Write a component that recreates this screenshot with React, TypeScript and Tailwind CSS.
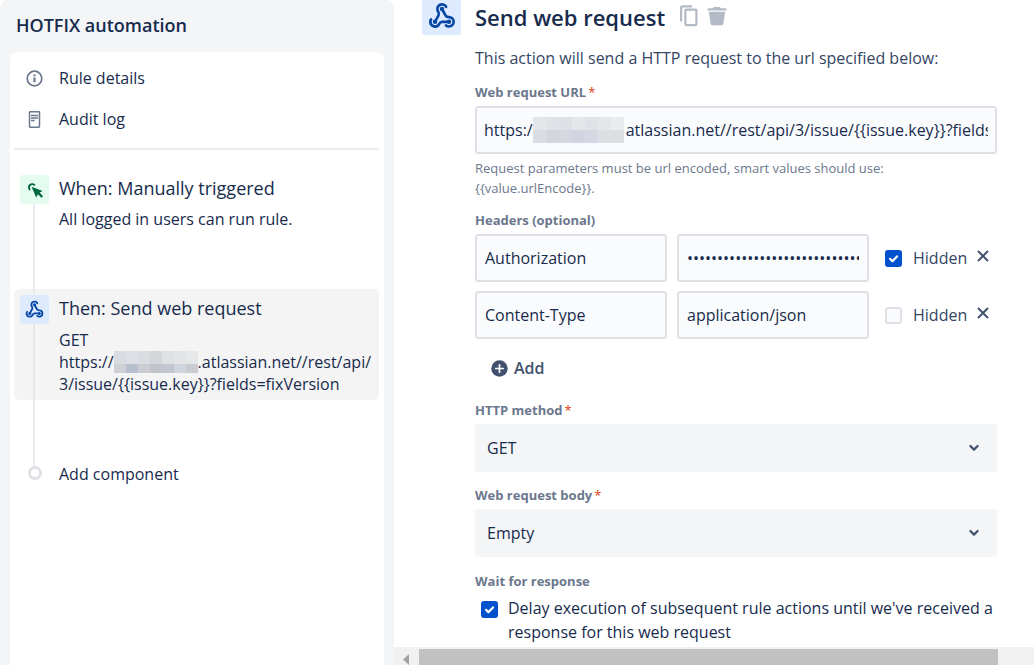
import { useState } from "react"

const Mosaic = ({ rows, cell }: { rows: string[][]; cell: string[] }) => (
    <span className="inline-flex flex-col align-top" aria-hidden="true">
        {rows.map((row, r) => (
            <span key={r} className="flex">
                {row.map((color, i) => (
                    <span key={i} className={cell[r]} style={{ backgroundColor: color }} />
                ))}
            </span>
        ))}
    </span>
)

const sideMosaic = [
    ["#d9dbe0", "#dde0e6", "#dadce1", "#d5d6da", "#dfe1e5", "#e2e4e7", "#e6e7e9"],
    ["#ced0d6", "#b8bfce", "#cbcdd3", "#c2c4cb", "#c3c6ce", "#cfd5df", "#c9cbd1"],
]

const urlMosaic = [
    ["#e3e5e9", "#dfe3e7", "#dde1e5", "#e5e6ea", "#dfe2e6", "#e4e6ea", "#e9ebee"],
    ["#dadde3", "#d3d6df", "#d5d8e1", "#d2d5df", "#d4d8e2", "#dcdfe4", "#dbdee3"],
]

function WebhookIcon({ className }: { className?: string }) {
    return (
        <svg viewBox="0 0 24 24" className={className} fill="none" stroke="#0747a6" strokeWidth="2.3" strokeLinecap="round" strokeLinejoin="round">
            <path d="M18 17h-6c-1.100 0-1.950.9-2.480 1.880A4 4 0 0 1 2 17c0-.7.2-1.400.57-2" />
            <path d="M6 17l3.130-5.780c.53-.97.1-2.180-.5-3.100a4 4 0 1 1 6.890-4.060" />
            <path d="M12 6l3.130 5.730C15.660 12.700 16.900 13 18 13a4 4 0 0 1 0 8c-1 0-1.900-.3-2.600-.9" />
            <g fill="#0747a6" stroke="none">
                <circle cx="12" cy="6" r="1.900" />
                <circle cx="6" cy="17" r="1.900" />
                <circle cx="18" cy="17" r="1.900" />
            </g>
        </svg>
    )
}

function Checkbox({ id, checked, onChange }: { id: string; checked: boolean; onChange: () => void }) {
    return (
        <span className="relative flex size-[17px] shrink-0">
            <input
                id={id}
                type="checkbox"
                checked={checked}
                onChange={onChange}
                className="size-full appearance-none rounded-[3px] border-2 border-[#dfe1e6] bg-[#fafbfc] checked:border-[#0052cc] checked:bg-[#0052cc]"
            />
            {checked && (
                <svg viewBox="0 0 17 17" className="pointer-events-none absolute inset-0" fill="none" stroke="#fff" strokeWidth="2.2" strokeLinecap="round" strokeLinejoin="round">
                    <path d="M5 8.8l2.4 2.4L12 6.4" />
                </svg>
            )}
        </span>
    )
}

function HeaderRow({ id, name, value, secret }: { id: string; name: string; value: string; secret?: boolean }) {
    const [hidden, setHidden] = useState(!!secret)
    const field = "h-12 w-full min-w-0 rounded-[3px] border-2 border-[#dfe1e6] bg-[#fafbfc] px-2 text-[16px]"

    return (
        <div className="flex">
            <div className="grid min-w-0 flex-1 grid-cols-2 gap-2.5">
                <input aria-label="Header name" defaultValue={name} className={field} />
                <input aria-label="Header value" type={hidden ? "password" : "text"} defaultValue={value} className={field} />
            </div>
            <div className="ml-4 flex w-28 shrink-0 items-center">
                <Checkbox id={id} checked={hidden} onChange={() => setHidden(!hidden)} />
                <label htmlFor={id} className="ml-[11px] text-[16px] text-[#344563]">Hidden</label>
                <button type="button" aria-label="Remove header" className="mb-1 ml-auto mr-2">
                    <svg viewBox="0 0 12 12" className="size-3" stroke="#42526e" strokeWidth="2">
                        <path d="M1 1l10 10M11 1L1 11" />
                    </svg>
                </button>
            </div>
        </div>
    )
}

function Label({ text, htmlFor, required }: { text: string; htmlFor?: string; required?: boolean }) {
    return (
        <label htmlFor={htmlFor} className="block text-[13px] font-bold leading-4 text-[#6b778c]">
            {text}
            {required && <span className="ml-0.5 font-normal text-[#de350b]">*</span>}
        </label>
    )
}

function SelectField({ id, options }: { id: string; options: string[] }) {
    return (
        <div className="relative mt-1.5">
            <select id={id} className="h-12 w-full appearance-none rounded-[3px] bg-[#f4f5f7] px-3 text-[16px]">
                {options.map((o) => <option key={o}>{o}</option>)}
            </select>
            <svg viewBox="0 0 10 8" className="pointer-events-none absolute right-[18px] top-5 h-2 w-2.5" fill="none" stroke="#42526e" strokeWidth="2.2" strokeLinecap="round" strokeLinejoin="round">
                <path d="M1.4 2L5 5.6 8.6 2" />
            </svg>
        </div>
    )
}

function Sidebar() {
    return (
        <aside className="w-[394px] shrink-0 rounded-t-lg bg-[#f4f5f7] px-2.5 pt-[11px]">
            <h2 className="ml-1.5 text-[18px] font-semibold leading-7">HOTFIX automation</h2>
            <div className="mt-[13px] min-h-[calc(100vh-52px)] rounded-t-lg bg-white pl-1 pr-[5px]">
                <nav className="flex flex-col gap-[17px] border-b-2 border-[#ebecf0] pb-[17px] pl-3 pt-3.5 text-[16px] leading-6">
                    <a href="#details" className="flex items-center gap-4">
                        <svg viewBox="0 0 17 17" className="size-[17px]" fill="none" stroke="#6b778c" strokeWidth="1.7">
                            <circle cx="8.5" cy="8.5" r="7.3" />
                            <path d="M8.5 7.6v4.6M8.5 4.4v1.8" strokeWidth="2.2" />
                        </svg>
                        Rule details
                    </a>
                    <a href="#log" className="flex items-center gap-4">
                        <svg viewBox="0 0 17 17" className="size-[17px]" fill="none" stroke="#6b778c" strokeWidth="1.5">
                            <rect x="3.5" y="0.8" width="10" height="15.4" rx="0.6" />
                            <path d="M5 4.4h7M5 7h7M5 9.4h3.6" />
                        </svg>
                        Audit log
                    </a>
                </nav>

                <ol className="mt-[18px]">
                    <li className="flex h-[121px] pl-1.5 pt-[7px]">
                        <div className="flex w-[29px] flex-col items-center">
                            <span className="flex size-[29px] shrink-0 items-center justify-center rounded-[3px] bg-[#e3fcef]">
                                <svg viewBox="0 0 16 16" className="size-4">
                                    <path d="M3.200 7.900A3.200 3.200 0 1 1 7.800 3.600" fill="none" stroke="#006644" strokeWidth="1.9" />
                                    <path d="M4.6 4.8L15.6 9 12.6 10.400 16 14.200 14.400 15.700 11 12.200 9.200 15.400Z" fill="#006644" />
                                </svg>
                            </span>
                            <span className="mr-px w-0.5 flex-1 bg-[#ebecf0]" />
                        </div>
                        <div className="ml-2.5">
                            <h3 className="-mt-px text-[18px] leading-7">When: Manually triggered</h3>
                            <p className="mt-1.5 text-[16px] leading-[22px]">All logged in users can run rule.</p>
                        </div>
                    </li>
                    <li className="flex h-[111px] rounded-[5px] bg-[#f4f4f4] pl-1.5">
                        <div className="flex w-[29px] flex-col items-center">
                            <span className="mr-px h-1.5 w-0.5 bg-[#e6e7eb]" />
                            <span className="flex size-[29px] shrink-0 items-center justify-center rounded-[3px] bg-[#deebff]">
                                <WebhookIcon className="size-[19px]" />
                            </span>
                            <span className="mr-px w-0.5 flex-1 bg-[#e6e7eb]" />
                        </div>
                        <div className="ml-2.5 min-w-0 whitespace-nowrap pt-[5px]">
                            <h3 className="text-[18px] leading-7">Then: Send web request</h3>
                            <p className="mt-[7px] text-[16px] leading-[22px]">
                                GET<br />
                                https://<Mosaic rows={sideMosaic} cell={["h-[13px] w-3", "h-[9px] w-3"]} />.atlassian.net//rest/api/<br />
                                3/issue/{"{{issue.key}}"}?fields=fixVersion
                            </p>
                        </div>
                    </li>
                    <li className="flex pl-1.5">
                        <div className="flex w-[29px] flex-col items-center">
                            <span className="mr-px h-[66px] w-0.5 bg-[#ebecf0]" />
                            <span className="size-3.5 rounded-full border-[3px] border-[#dfe1e6]" />
                        </div>
                        <button type="button" className="ml-2.5 self-end text-[16px] leading-3">Add component</button>
                    </li>
                </ol>
            </div>
        </aside>
    )
}

export default function App() {
    const [wait, setWait] = useState(true)

    return (
        <div className="flex min-h-screen bg-white font-['Open_Sans',sans-serif] text-[#172b4d]">
            <Sidebar />
            <div className="flex min-w-0 flex-1 flex-col">
                <main className="flex pl-7 pr-[37px]">
                    <span className="flex h-[35px] w-[39px] shrink-0 justify-center rounded-b-[3px] bg-[#deebff] pt-0.5">
                        <WebhookIcon className="size-7" />
                    </span>
                    <form className="ml-3.5 min-w-0 flex-1">
                        <div className="flex h-[35px] items-center">
                            <h1 className="text-[22px] font-semibold">Send web request</h1>
                            <button type="button" aria-label="Copy" className="mb-1 ml-3.5">
                                <svg viewBox="0 0 20 22" className="h-[22px] w-5" fill="none" stroke="#b3bac5" strokeWidth="2.2">
                                    <path d="M2.1 16.5V3a1.6 1.6 0 0 1 1.6-1.6H13" />
                                    <rect x="6.4" y="4.6" width="11" height="15.6" rx="1" />
                                </svg>
                            </button>
                            <button type="button" aria-label="Delete" className="mb-1 ml-2">
                                <svg viewBox="0 0 20 20" className="size-5" fill="#b3bac5">
                                    <path d="M.5 3.2a1 1 0 0 1 1-1h5V1.6a.6.6 0 0 1 .6-.6h5.800a.6.6 0 0 1 .6.6v.6h5a1 1 0 0 1 1 1v1.2H.5zM1.800 5.8h16.400l-2 12.4a1.2 1.2 0 0 1-1.2 1H5a1.2 1.2 0 0 1-1.2-1z" />
                                </svg>
                            </button>
                        </div>
                        <p className="mb-3.5 mt-[11px] text-[16px] leading-6 text-[#344563]">This action will send a HTTP request to the url specified below:</p>

                        <Label text="Web request URL" htmlFor="url" required />
                        <div className="mt-1.5 flex h-12 items-center overflow-hidden rounded-[3px] border-2 border-[#dfe1e6] bg-[#fafbfc] px-[7px] text-[16px]">
                            <span>https:/</span>
                            <Mosaic rows={urlMosaic} cell={["size-[13px]", "size-[13px]"]} />
                            <input id="url" defaultValue="atlassian.net//rest/api/3/issue/{{issue.key}}?fields=fixVersion" className="ml-0.5 min-w-0 flex-1 bg-transparent" />
                        </div>
                        <p className="mb-3.5 mt-1 text-[13px] leading-5 text-[#6b778c]">
                            Request parameters must be url encoded, smart values should use:<br />
                            {"{{value.urlEncode}}"}.
                        </p>

                        <Label text="Headers (optional)" />
                        <div className="mt-1.5 flex flex-col gap-[9px]">
                            <HeaderRow id="hide-auth" name="Authorization" value="Basic dXNlckBleGFtcGxlLmNvbTp0b2tlbg==" secret />
                            <HeaderRow id="hide-type" name="Content-Type" value="application/json" />
                        </div>
                        <button type="button" className="mb-[18px] ml-4 mt-[13px] flex h-8 items-center gap-1.5 text-[16px] font-semibold text-[#42526e]">
                            <svg viewBox="0 0 17 17" className="size-[17px]">
                                <circle cx="8.5" cy="8.5" r="8.2" fill="#42526e" />
                                <path d="M8.5 4.8v7.4M4.8 8.5h7.4" stroke="#fff" strokeWidth="1.7" strokeLinecap="round" />
                            </svg>
                            Add
                        </button>

                        <Label text="HTTP method" htmlFor="method" required />
                        <SelectField id="method" options={["GET", "POST", "PUT", "DELETE"]} />
                        <div className="h-[15px]" />
                        <Label text="Web request body" htmlFor="body" required />
                        <SelectField id="body" options={["Empty", "Custom data"]} />
                        <div className="h-4" />
                        <Label text="Wait for response" htmlFor="wait" />
                        <div className="ml-1.5 mt-[7px] flex">
                            <span className="mt-[5px]">
                                <Checkbox id="wait" checked={wait} onChange={() => setWait(!wait)} />
                            </span>
                            <label htmlFor="wait" className="ml-2.5 text-[16px] leading-6">
                                Delay execution of subsequent rule actions until we've received a response for this web request
                            </label>
                        </div>
                    </form>
                </main>

                <div className="mt-auto flex h-[18px] items-end bg-[#f1f1f1] pr-9">
                    <svg viewBox="0 0 25 16" className="h-4 w-[25px]" fill="#a3a3a3">
                        <path d="M15 5v11L9 10.5z" />
                    </svg>
                    <div className="h-4 flex-1 bg-[#c1c1c1]" />
                </div>
            </div>
        </div>
    )
}
